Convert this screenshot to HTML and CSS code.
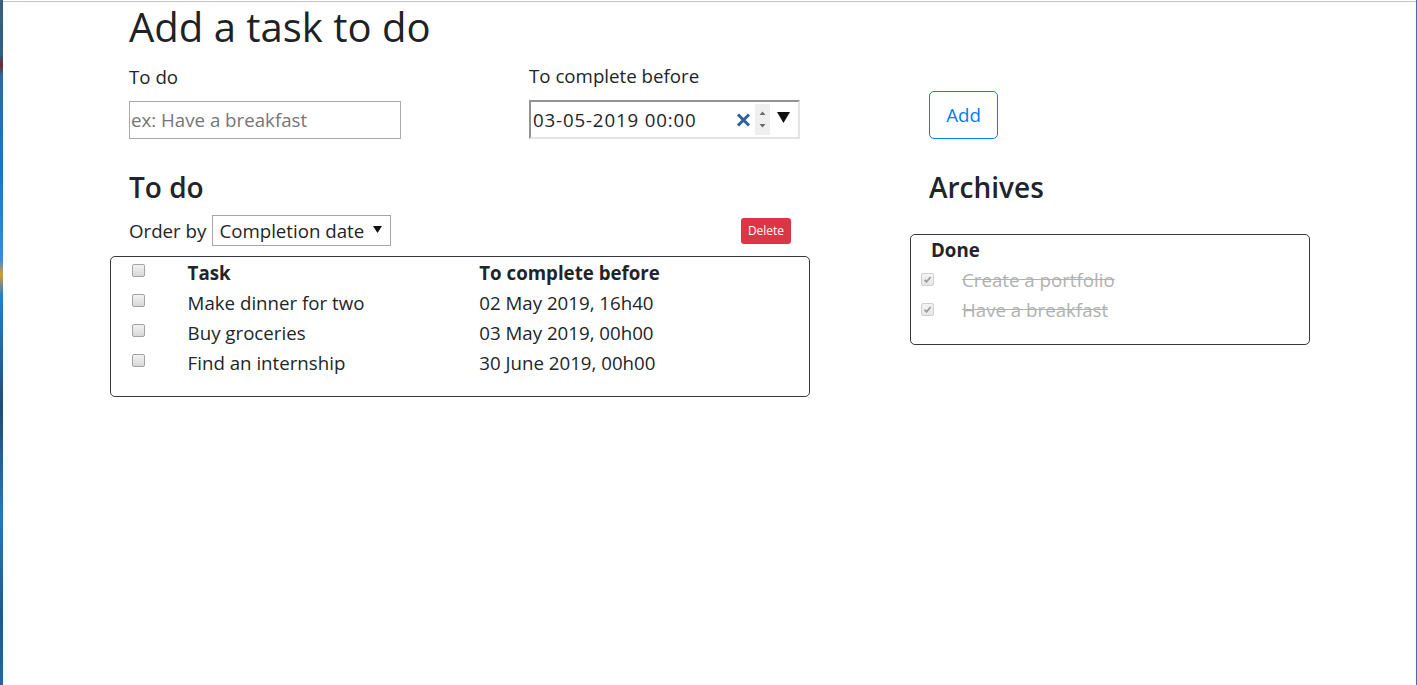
FILE: index.html
```html
<!DOCTYPE html>
<html>
<head>
<meta charset="utf-8">
<title>To do</title>
<link rel="stylesheet" href="styles.css">
</head>
<body>
<div class="screen">
  <div class="desk"></div>
  <div class="page">
    <div class="container">
      <h1 class="title">Add a task to do</h1>
      <div class="form-row">
        <div class="field">
          <label class="label">To do</label>
          <div class="text-input"><span class="placeholder">ex: Have a breakfast</span></div>
        </div>
        <div class="field">
          <label class="label">To complete before</label>
          <div class="date-input">
            <span class="date-value">03-05-2019 00:00</span>
            <span class="date-clear"><svg width="15" height="14" viewBox="0 0 15 14"><path d="M2 1.5 L13 12.5 M13 1.5 L2 12.5" stroke="#2f5f9f" stroke-width="3"/></svg></span>
            <span class="date-spin"><svg width="15" height="31" viewBox="0 0 15 31"><path d="M4.5 11 L7.5 7.5 L10.5 11 Z" fill="#6a6a6a"/><path d="M4.5 20 L7.5 23.5 L10.5 20 Z" fill="#6a6a6a"/></svg></span>
            <span class="date-drop"><svg width="13" height="12" viewBox="0 0 13 12"><path d="M0 0 L13 0 L6.5 11 Z" fill="#111"/></svg></span>
          </div>
        </div>
        <div class="field field-end">
          <button class="btn-add">Add</button>
        </div>
      </div>

      <div class="lists">
        <section class="todo">
          <h2 class="section-title">To do</h2>
          <div class="order-row">
            <div class="order">
              <span>Order by</span>
              <div class="select"><span>Completion date</span><svg width="9" height="7" viewBox="0 0 9 7"><path d="M0 0 L9 0 L4.5 7 Z" fill="#111"/></svg></div>
            </div>
            <button class="btn-delete">Delete</button>
          </div>
          <div class="table-box">
            <div class="row head">
              <span class="cb"></span>
              <span class="cell">Task</span>
              <span class="cell">To complete before</span>
            </div>
            <div class="row">
              <span class="cb"></span>
              <span class="cell">Make dinner for two</span>
              <span class="cell">02 May 2019, 16h40</span>
            </div>
            <div class="row">
              <span class="cb"></span>
              <span class="cell">Buy groceries</span>
              <span class="cell">03 May 2019, 00h00</span>
            </div>
            <div class="row">
              <span class="cb"></span>
              <span class="cell">Find an internship</span>
              <span class="cell">30 June 2019, 00h00</span>
            </div>
          </div>
        </section>
        <div class="spacer"></div>
        <section class="archives">
          <h2 class="section-title">Archives</h2>
          <div class="archive-box">
            <div class="done-title">Done</div>
            <div class="arow">
              <span class="cb cb-done"><svg width="11" height="11" viewBox="0 0 11 11"><path d="M2.5 5.8 L4.6 7.8 L8.6 3" stroke="#9a9a9a" stroke-width="1.8" fill="none"/></svg></span>
              <span class="struck">Create a portfolio</span>
            </div>
            <div class="arow">
              <span class="cb cb-done"><svg width="11" height="11" viewBox="0 0 11 11"><path d="M2.5 5.8 L4.6 7.8 L8.6 3" stroke="#9a9a9a" stroke-width="1.8" fill="none"/></svg></span>
              <span class="struck">Have a breakfast</span>
            </div>
          </div>
        </section>
      </div>
    </div>
  </div>
  <div class="edge"></div>
</div>
</body>
</html>
```

FILE: styles.css
```css
* { box-sizing: border-box; }
html, body { margin: 0; padding: 0; background: #fff; }
body {
  font-family: "Open Sans", "Noto Sans", "Liberation Sans", sans-serif;
  font-size: 18.7px;
  color: #212529;
}
.screen { display: flex; height: 685px; overflow: hidden; }
.desk {
  width: 3px;
  flex: none;
  background: linear-gradient(to bottom, #355f80 0, #2b5f8c 8%, #6b2a2a 9.5%, #2c6aa0 11%, #1f74c0 25%, #3c8cd4 38%, #d79a3a 40%, #2a7fc8 43%, #1b4c78 60%, #2a77b9 75%, #1c5a8d 90%, #24679f 100%);
}
.edge { width: 1px; flex: none; background: #1a78d6; }
.page {
  flex: 1;
  margin-top: 1px;
  border-top: 1px solid #c3c3c3;
  background: #fff;
}
.container { width: 1200px; margin-left: 107px; }

.title {
  margin: 0;
  padding-left: 19px;
  font-size: 40px;
  font-weight: 500;
  line-height: 55px;
  margin-top: -3px;
  color: #1e2226;
}

.form-row {
  display: grid;
  grid-template-columns: 400px 400px 400px;
  margin-top: 10px;
  align-items: end;
}
.field { padding-left: 19px; display: flex; flex-direction: column; }
.field-end { justify-content: flex-end; }
.label { line-height: 24px; }
.text-input {
  margin-top: 12px;
  width: 272px;
  height: 38px;
  border: 1px solid #a9a9a9;
  padding-left: 1px;
  line-height: 36px;
}
.placeholder { color: #767676; }
.date-input {
  margin-top: 12px;
  width: 271px;
  height: 39px;
  border-style: solid;
  border-width: 2px;
  border-color: #939393 #e4e4e4 #e4e4e4 #939393;
  display: flex;
  align-items: center;
  padding-left: 2px;
}
.date-value { letter-spacing: 0.85px; flex: 1; white-space: nowrap; line-height: 33px; }
.date-clear { display: flex; margin-right: 4px; }
.date-spin { display: flex; background: #efefef; height: 31px; align-items: center; margin-right: 7px; }
.date-drop { display: flex; margin-right: 8px; margin-top: -4px; }

.btn-add {
  font: inherit;
  color: #007bff;
  background: #fff;
  border: 1px solid #007bff;
  border-radius: 5px;
  width: 69px;
  height: 48px;
  padding: 0;
  line-height: 46px;
}

.lists {
  display: grid;
  grid-template-columns: 700px 100px 400px;
  margin-top: 31px;
}
.section-title {
  margin: 0;
  padding-left: 19px;
  font-size: 28px;
  font-weight: 600;
  line-height: 34px;
}
.order-row {
  margin-top: 11px;
  padding: 0 19px;
  display: flex;
  justify-content: space-between;
  align-items: flex-start;
}
.order { display: flex; align-items: baseline; gap: 6px; }
.select {
  display: flex;
  align-items: baseline;
  gap: 9px;
  border: 1px solid #a6a6a6;
  padding: 0 8px 0 6px;
  height: 31px;
  line-height: 30px;
}
.select svg { align-self: center; margin-top: -3px; }
.btn-delete {
  margin-top: 3px;
  font-family: inherit;
  font-size: 12px;
  color: #fff;
  background: #dc3545;
  border: 0;
  border-radius: 3px;
  width: 50px;
  height: 26px;
  padding: 0;
  line-height: 26px;
}
.table-box {
  margin-top: 10px;
  border: 1px solid #343a40;
  border-radius: 5px;
  padding: 1px 0 18px;
}
.row {
  display: grid;
  grid-template-columns: 76.6px 291.7px 1fr;
  line-height: 30px;
}
.row .cb { margin: 6px 0 0 21px; }
.head .cell { font-weight: 700; }

.cb {
  display: block;
  width: 13px;
  height: 13px;
  border: 1px solid #a3a3a3;
  border-radius: 2px;
  background: linear-gradient(to bottom, #f2f2f2, #d8d8d8);
}
.cb-done {
  border-color: #cfcfcf;
  background: linear-gradient(to bottom, #f4f4f4, #e6e6e6);
  display: flex;
  align-items: center;
  justify-content: center;
}

.archive-box {
  margin-top: 30px;
  border: 1px solid #343a40;
  border-radius: 5px;
  padding: 0 0 19px;
}
.done-title { font-weight: 700; line-height: 30px; padding-left: 20px; }
.arow {
  display: grid;
  grid-template-columns: 51px 1fr;
  line-height: 30px;
}
.arow .cb { margin: 8px 0 0 10px; }
.struck { color: #b1b1b1; text-decoration: line-through; }
```
